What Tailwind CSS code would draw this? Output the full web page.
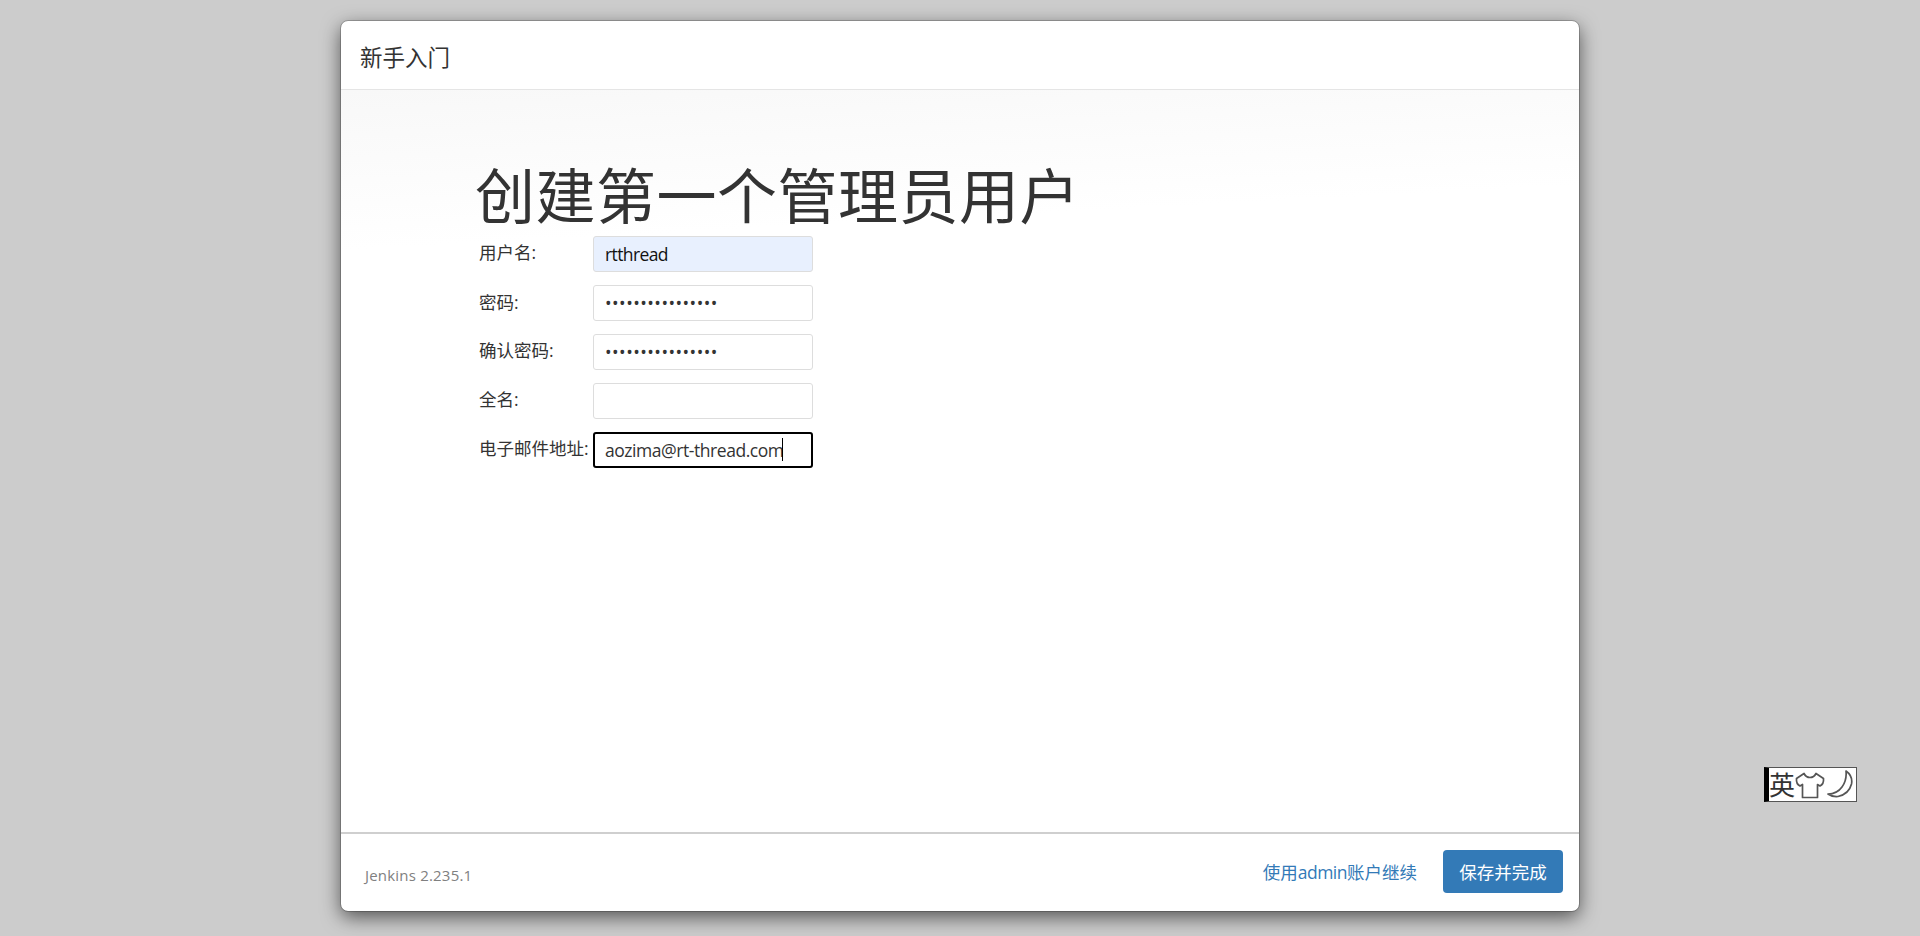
<!DOCTYPE html>
<html lang="zh-CN">
<head>
  <meta charset="UTF-8">
  <title>Jenkins</title>
  <script src="https://cdn.jsdelivr.net/npm/@tailwindcss/browser@4"></script>
</head>
<body class="relative h-[936px] overflow-hidden bg-[#cccccc] font-['Open_Sans','Noto_Sans_CJK_SC',sans-serif] text-[17.5px] text-[#333333]">
  <div class="h-[935px] border-b border-black">
    <!-- Dialog -->
    <div class="mx-auto mt-[21px] flex h-[890px] w-[1238px] flex-col rounded-[7px] bg-white shadow-[0_6px_19px_rgba(0,0,0,0.6)] outline outline-black/20">
      <!-- Header -->
      <header class="flex h-[69px] shrink-0 items-center border-b border-[#e5e5e5] pt-[5px] pl-[19px]">
        <h4 class="text-[22.5px]">新手入门</h4>
      </header>

      <!-- Content -->
      <main class="flex-1 bg-[linear-gradient(177deg,#f8f8f8_0,#ffffff_160px)] pl-[134px] pt-[73px]">
        <h1 class="mb-[7px] text-[60px] leading-[66px] tracking-[0.5px]">创建第一个管理员用户</h1>
        <form class="ml-[4px] grid grid-cols-[114px_220px] items-center gap-y-[13px]">
          <label class="pb-[3px]">用户名:</label>
          <input type="text" value="rtthread" class="h-[36px] rounded-[3px] border border-[#dddddd] bg-[#e8f0fe] px-[11px] tracking-[-0.6px] text-[#111111]">
          <label class="pb-[2px]">密码:</label>
          <input type="password" value="aaaaaaaaaaaaaaaa" class="h-[36px] rounded-[3px] border border-[#dddddd] bg-white px-[11px] tracking-[0.47px]">
          <label class="pb-[3px]">确认密码:</label>
          <input type="password" value="aaaaaaaaaaaaaaaa" class="h-[36px] rounded-[3px] border border-[#dddddd] bg-white px-[11px] tracking-[0.47px]">
          <label class="pb-[4px]">全名:</label>
          <input type="text" class="h-[36px] rounded-[3px] border border-[#dddddd] bg-white px-[11px]">
          <label class="pb-[4px]">电子邮件地址:</label>
          <div class="relative">
            <input type="text" value="aozima@rt-thread.com" class="h-[36px] w-full rounded-[3px] border-2 border-black bg-white px-[10px] tracking-[-0.45px] text-[#333333]">
            <span class="absolute left-[189px] top-[6px] h-[23px] w-px bg-black"></span>
          </div>
        </form>
      </main>

      <!-- Footer -->
      <footer class="flex h-[79px] shrink-0 items-center justify-between border-t-2 border-[#cfcfcf] pb-[2px] pl-[24px] pr-[16px]">
        <span class="mt-[8px] text-[15px] tracking-[0.2px] text-[#808080]">Jenkins 2.235.1</span>
        <div class="flex items-center gap-[26px]">
          <a class="mt-[2px] text-[#337ab7]">使用<span class="tracking-[-0.5px]">admin</span>账户继续</a>
          <button class="h-[43px] w-[120px] rounded-[4px] bg-[#337ab7] pt-[2px] text-white">保存并完成</button>
        </div>
      </footer>
    </div>
  </div>

  <!-- IME status bar -->
  <div class="absolute left-[1764px] top-[767px] flex h-[35px] w-[93px] items-center border border-[#555555] border-l-[5px] border-l-black bg-white">
    <span class="text-[26px] leading-none text-[#333333]">英</span>
    <svg class="mt-[2px] h-[27px] w-[30px]" viewBox="0 0 30 27" fill="none" stroke="#555555" stroke-width="1.7" stroke-linejoin="round">
      <path d="M9 1.500 L1.500 6.500 Q1 12 5 14 L7.500 12.500 V25.500 H22.500 V12.500 L25 14 Q29 12 28.500 6.500 L21 1.500 Q19 5.500 15 5.500 Q11 5.500 9 1.500 Z"/>
    </svg>
    <svg class="ml-[1px] h-[29px] w-[27px]" viewBox="0 0 27 29" fill="none" stroke="#555555" stroke-width="1.7" stroke-linejoin="round">
      <path d="M20 1 Q27 6 25.500 14 Q23 24 12 26.500 Q6 27 2 24 Q11 24 16 17 Q21 10 20 1 Z"/>
    </svg>
  </div>
</body>
</html>
